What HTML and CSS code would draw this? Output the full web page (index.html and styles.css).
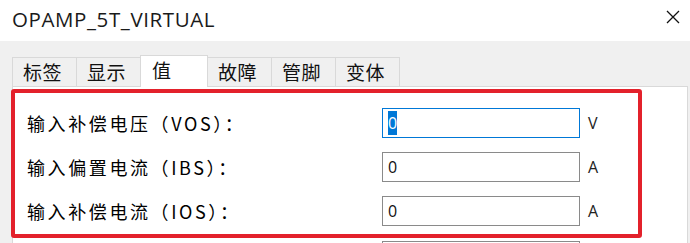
FILE: index.html
```html
<!DOCTYPE html>
<html>
<head>
<meta charset="utf-8">
<link rel="stylesheet" href="styles.css">
</head>
<body>
<div class="window">
  <div class="titlebar">
    <span class="title">OPAMP_5T_VIRTUAL</span>
    <svg class="close" width="14" height="14" viewBox="0 0 14 14"><path d="M1 1 L13 13 M13 1 L1 13" stroke="#111" stroke-width="1.3" fill="none"/></svg>
  </div>
  <div class="client">
    <div class="tabs">
      <div class="tab">标签</div>
      <div class="tab">显示</div>
      <div class="tab active">值</div>
      <div class="tab">故障</div>
      <div class="tab">管脚</div>
      <div class="tab">变体</div>
    </div>
    <div class="panel">
      <div class="highlight">
        <div class="row">
          <span class="label">输入补偿电压（VOS）：</span>
          <div class="field focused"><span class="sel">0</span></div>
          <span class="unit">V</span>
        </div>
        <div class="row">
          <span class="label">输入偏置电流（IBS）：</span>
          <div class="field">0</div>
          <span class="unit">A</span>
        </div>
        <div class="row">
          <span class="label">输入补偿电流（IOS）：</span>
          <div class="field">0</div>
          <span class="unit">A</span>
        </div>
      </div>
      <div class="row extra">
        <span class="label">开环增益（A）：</span>
        <div class="field"></div>
      </div>
    </div>
  </div>
</div>
</body>
</html>
```

FILE: styles.css
```css
* { box-sizing: border-box; }
html, body { margin: 0; padding: 0; }
body {
  width: 690px;
  height: 243px;
  overflow: hidden;
  background: #f0f0f0;
  font-family: "Noto Sans CJK SC", "Noto Sans", sans-serif;
  color: #111;
}
.window { width: 690px; height: 243px; overflow: hidden; }
.titlebar {
  height: 41px;
  background: #fff;
  display: flex;
  align-items: center;
  justify-content: space-between;
  padding: 0 10px 3px 12px;
}
.title {
  font-family: "Open Sans", "Noto Sans", sans-serif;
  font-size: 20.5px;
  letter-spacing: 0.6px;
  color: #1a1a1a;
}
.close { margin-top: -5px; }
.client { background: #f0f0f0; padding-top: 16px; height: 202px; }
.tabs { display: flex; padding-left: 12px; height: 29px; align-items: flex-end; }
.tab {
  height: 29px;
  width: 65px;
  border: 1px solid #d9d9d9;
  border-bottom: none;
  margin-right: -1px;
  background: #f0f0f0;
  font-size: 19px;
  line-height: 27px;
  padding-left: 10px;
  letter-spacing: 0.5px;
  color: #111;
}
.tab.active {
  height: 32px;
  width: 68px;
  background: #fff;
  position: relative;
  z-index: 1;
  margin-bottom: -1px;
  padding-left: 11px;
  line-height: 28px;
}
.panel {
  margin-left: 12px;
  width: 676px;
  height: 200px;
  background: #fff;
  border: 1px solid #d9d9d9;
}
.highlight {
  margin: 2px 0 0 -2px;
  width: 631px;
  height: 149px;
  border: 4px solid #e3212b;
  border-radius: 3px;
  padding: 15px 0 0 12px;
  display: flex;
  flex-direction: column;
  gap: 14px;
}
.row { display: flex; align-items: center; height: 30px; flex-shrink: 0; }
.label {
  width: 355px;
  font-size: 18px;
  letter-spacing: 2.6px;
  color: #000;
}
.field {
  width: 198px;
  height: 30px;
  border: 1px solid #8a8a8a;
  font-family: "Open Sans", "Noto Sans", sans-serif;
  font-size: 16px;
  line-height: 28px;
  padding-left: 5px;
  background: #fff;
}
.field.focused { border-color: #0078d7; }
.sel {
  background: #0078d7;
  color: #fff;
  padding: 1px 0;
}
.unit {
  margin-left: 8px;
  font-family: "Open Sans", "Noto Sans", sans-serif;
  font-size: 16px;
  color: #222;
}
.extra { margin-top: 3px; padding-left: 14px; }
```
